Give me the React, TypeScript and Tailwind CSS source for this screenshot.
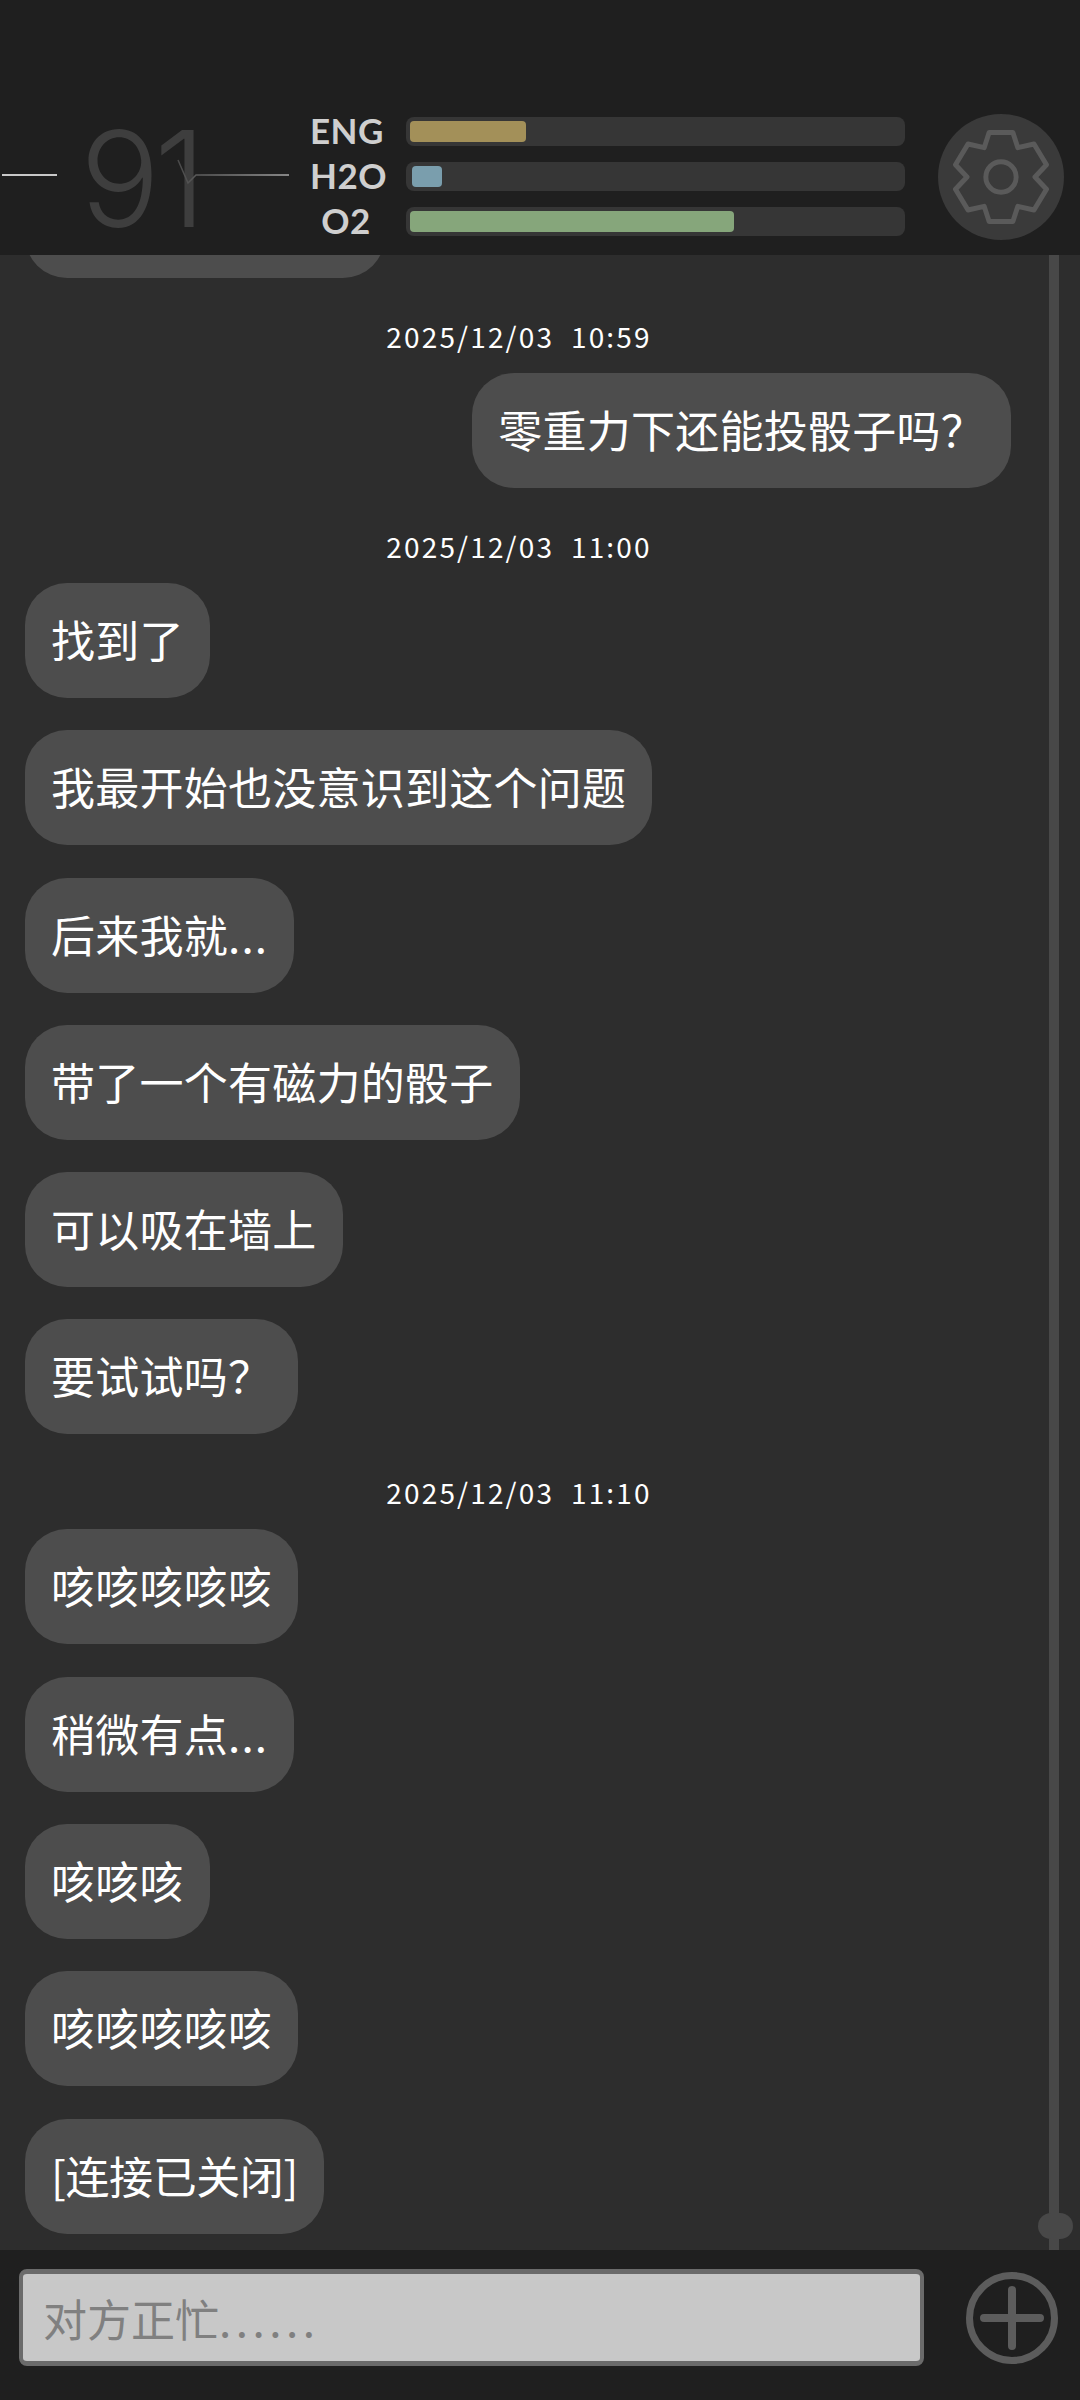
const CJK = "font-['Noto_Sans_CJK_SC','Noto_Sans',sans-serif]";

const FIRST_GROUP = [
  "找到了",
  "我最开始也没意识到这个问题",
  "后来我就...",
  "带了一个有磁力的骰子",
  "可以吸在墙上",
  "要试试吗？",
];

const SECOND_GROUP = [
  "咳咳咳咳咳",
  "稍微有点...",
  "咳咳咳",
  "咳咳咳咳咳",
  "[连接已关闭]",
];

function Bubble({ text }: { text: string }) {
  const hasDots = text.endsWith("...");
  const spacing = text.startsWith("[") ? "tracking-[-0.4px]" : "tracking-[0.25px]";
  return (
    <div className={`flex h-[115px] w-fit items-center rounded-[42px] bg-[#4d4d4d] px-[26px] pb-[3px] text-[44px] whitespace-nowrap text-white ${spacing}`}>
      {hasDots ? text.slice(0, -3) : text}
      {hasDots && <span className="tracking-[1.2px]">...</span>}
    </div>
  );
}

function Timestamp({ text }: { text: string }) {
  return (
    <div className="mt-[38px] mb-[17px] flex h-10 items-center justify-center pl-[2px] text-[28px] tracking-[2.15px] whitespace-pre text-white">
      {text}
    </div>
  );
}

function StatBar({
  label,
  fill,
  color,
  inset,
}: {
  label: string;
  fill: string;
  color: string;
  inset: string;
}) {
  return (
    <div className="flex h-[29px] items-center">
      <span className="w-[72px] pb-[2px] text-center font-['Lato',sans-serif] text-[35px] leading-none font-bold tracking-[0.5px] whitespace-nowrap text-[#cfcfcf]">
        {label}
      </span>
      <div className={`ml-6 flex h-full w-[499px] items-center rounded-lg bg-[#363636] ${inset}`}>
        <div className={`h-[21px] rounded ${fill} ${color}`} />
      </div>
    </div>
  );
}

function GearIcon() {
  return (
    <svg width="126" height="126" viewBox="-191 -191 382 382" fill="none" stroke="#5a5a5a" strokeWidth="15" strokeLinejoin="round">
      <path d="M-36-135H36L51-89 100-100 138-37 103 0 138 37 100 100 51 89 36 135H-36L-51 89-100 100-138 37-103 0-138-37-100-100-51-89Z" />
      <circle r="46" />
    </svg>
  );
}

export default function App() {
  return (
    <div className={`flex h-[2400px] w-[1080px] flex-col overflow-hidden bg-[#2d2d2d] ${CJK}`}>
      <header className="relative z-10 flex h-[255px] shrink-0 items-end bg-[#1f1f1f] pb-[19px]">
        <div className="relative h-[122px] w-[310px] shrink-0">
          <span className="absolute top-[-10px] left-[80px] font-['Inter',sans-serif] text-[133px] leading-[150px] font-[350] tracking-[-6px] text-[#3e3e3e]">
            91
          </span>
          <svg className="absolute top-0 left-0" width="300" height="122" viewBox="0 0 300 122" fill="none">
            <defs>
              <linearGradient id="ecg" x1="178" y1="0" x2="289" y2="0" gradientUnits="userSpaceOnUse">
                <stop offset="0" stopColor="#4a4a4a" />
                <stop offset="1" stopColor="#a8a8a8" />
              </linearGradient>
            </defs>
            <path d="M2 61H57" stroke="#c8c8c8" strokeWidth="2" />
            <path d="M178 46L188 69L196 61H289" stroke="url(#ecg)" strokeWidth="1.5" />
          </svg>
        </div>
        <div className="flex flex-col gap-[16px]">
          <StatBar label="ENG" fill="w-[116px]" color="bg-[#a39059]" inset="pl-1" />
          <StatBar label="H2O" fill="w-[30px]" color="bg-[#7a9ead]" inset="pl-1.5" />
          <StatBar label="O2" fill="w-[324px]" color="bg-[#86a67b]" inset="pl-1" />
        </div>
        <div className="absolute top-[114px] left-[938px] size-[126px] rounded-full bg-[#3a3a3a]">
          <GearIcon />
        </div>
      </header>

      <div className="relative min-h-0 flex-1">
        <div className="mt-[-92px] flex flex-col pr-[69px] pl-[25px]">
          <div className="h-[115px] w-[360px] rounded-[42px] bg-[#4d4d4d]" />
          <Timestamp text="2025/12/03  10:59" />
          <div className="flex justify-end">
            <Bubble text="零重力下还能投骰子吗？" />
          </div>
          <Timestamp text="2025/12/03  11:00" />
          <div className="flex flex-col gap-[32.3px]">
            {FIRST_GROUP.map((text, i) => (
              <Bubble key={i} text={text} />
            ))}
          </div>
          <Timestamp text="2025/12/03  11:10" />
          <div className="flex flex-col gap-[32.3px]">
            {SECOND_GROUP.map((text, i) => (
              <Bubble key={i} text={text} />
            ))}
          </div>
        </div>
        <div className="absolute top-0 right-[21px] bottom-0 w-[10px] bg-[#484848]" />
        <div className="absolute right-[7px] bottom-[11px] h-[26px] w-[35px] rounded-full bg-[#484848]" />
      </div>

      <footer className="flex h-[150px] shrink-0 items-start bg-[#1f1f1f] pt-[19px] pl-[19px]">
        <div className="flex h-[97px] w-[905px] items-center rounded-lg border-x-4 border-y-[5px] border-[#6b6b6b] bg-[#c8c8c8] pl-5 text-[44px] text-[#808080]">
          对方正忙<span className="tracking-[4.5px]">......</span>
        </div>
        <svg className="mt-[3px] ml-[42px]" width="92" height="92" viewBox="0 0 92 92" fill="none" stroke="#5c5c5c" strokeLinecap="round">
          <circle cx="46" cy="46" r="42.5" strokeWidth="7" />
          <path d="M46 18V74M18 46H74" strokeWidth="8" />
        </svg>
      </footer>
    </div>
  );
}
